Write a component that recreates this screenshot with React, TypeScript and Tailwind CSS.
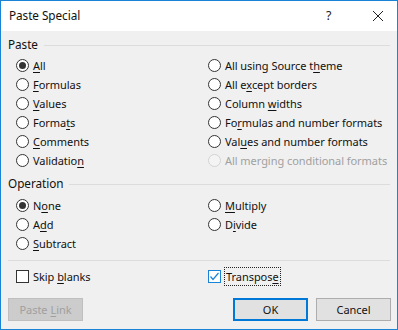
import React from 'react';

type Opt = { pre: string; key: string; post: string; checked?: boolean; disabled?: boolean };

const Label: React.FC<{ o: Opt }> = ({ o }) => (
  <span className="whitespace-nowrap">
    {o.pre}
    <span className="underline underline-offset-2">{o.key}</span>
    {o.post}
  </span>
);

const Radio: React.FC<{ o: Opt }> = ({ o }) => (
  <div className={`flex items-center h-[19px] gap-[4px] ${o.disabled ? 'text-[#a0a0a0]' : 'text-[#111]'}`}>
    <span
      className={`w-[13px] h-[13px] rounded-full border flex items-center justify-center shrink-0 ${
        o.disabled ? 'border-[#d4d4d4] bg-[#f4f4f4]' : 'border-[#333] bg-white'
      }`}
    >
      {o.checked && <span className="w-[7px] h-[7px] rounded-full bg-[#333]" />}
    </span>
    <Label o={o} />
  </div>
);

const Group: React.FC<{ title?: string }> = ({ title }) => (
  <div className="flex items-center h-4 gap-[6px] pr-[7px]">
    {title && <span className="text-[#111] text-[11.75px]">{title}</span>}
    <div className="flex-1 h-px bg-[#dcdcdc]" />
  </div>
);

const pasteLeft: Opt[] = [
  { pre: '', key: 'A', post: 'll', checked: true },
  { pre: '', key: 'F', post: 'ormulas' },
  { pre: '', key: 'V', post: 'alues' },
  { pre: 'Forma', key: 't', post: 's' },
  { pre: '', key: 'C', post: 'omments' },
  { pre: 'Validatio', key: 'n', post: '' },
];

const pasteRight: Opt[] = [
  { pre: 'All using Source t', key: 'h', post: 'eme' },
  { pre: 'All e', key: 'x', post: 'cept borders' },
  { pre: 'Column ', key: 'w', post: 'idths' },
  { pre: 'Fo', key: 'r', post: 'mulas and number formats' },
  { pre: 'Val', key: 'u', post: 'es and number formats' },
  { pre: 'All merging conditional formats', key: '', post: '', disabled: true },
];

const opLeft: Opt[] = [
  { pre: 'N', key: 'o', post: 'ne', checked: true },
  { pre: 'A', key: 'd', post: 'd' },
  { pre: '', key: 'S', post: 'ubtract' },
];

const opRight: Opt[] = [
  { pre: '', key: 'M', post: 'ultiply' },
  { pre: 'D', key: 'i', post: 'vide' },
];

export default function App() {
  return (
    <div
      className="w-[398px] h-[330px] border border-[#1883d7] bg-[#f0f0f0] flex flex-col text-[11px] tracking-[-0.05px] leading-none"
      style={{ fontFamily: '"Noto Sans", "Open Sans", sans-serif' }}
    >
      <div className="h-[30px] bg-white flex items-center pl-2 shrink-0">
        <span className="flex-1 text-[#111] text-[11.75px]">Paste Special</span>
        <span className="text-[#222] text-[12.5px] w-[14px] mr-[32px]">?</span>
        <svg width="12" height="12" viewBox="0 0 12 12" className="mr-[13px]">
          <path d="M1 1 L11 11 M11 1 L1 11" stroke="#222" strokeWidth="1" />
        </svg>
      </div>

      <div className="flex flex-col pl-[7px] pt-[6px]">
        <Group title="Paste" />
        <div className="grid grid-cols-[192px_1fr] pl-2 mt-[3px]">
          <div className="flex flex-col">
            {pasteLeft.map((o, i) => (
              <Radio key={i} o={o} />
            ))}
          </div>
          <div className="flex flex-col">
            {pasteRight.map((o, i) => (
              <Radio key={i} o={o} />
            ))}
          </div>
        </div>

        <div className="mt-[6px]">
          <Group title="Operation" />
        </div>
        <div className="grid grid-cols-[192px_1fr] pl-2 mt-[4px]">
          <div className="flex flex-col">
            {opLeft.map((o, i) => (
              <Radio key={i} o={o} />
            ))}
          </div>
          <div className="flex flex-col">
            {opRight.map((o, i) => (
              <Radio key={i} o={o} />
            ))}
          </div>
        </div>

        <div className="h-px bg-[#dcdcdc] mt-[7px] mr-[7px]" />

        <div className="grid grid-cols-[192px_1fr] pl-2 mt-[6px]">
          <div className="flex items-center h-[19px] gap-[4px] text-[#111]">
            <span className="w-[13px] h-[13px] border border-[#333] bg-white shrink-0" />
            <span className="whitespace-nowrap">
              Skip <span className="underline underline-offset-2">b</span>lanks
            </span>
          </div>
          <div className="flex items-center h-[19px] gap-[3px] text-[#111]">
            <span className="w-[13px] h-[13px] border border-[#1883d7] bg-white shrink-0 flex items-center justify-center">
              <svg width="11" height="11" viewBox="0 0 11 11">
                <path d="M1.5 5.5 L4 8.5 L9.5 2" stroke="#1883d7" strokeWidth="1.2" fill="none" />
              </svg>
            </span>
            <span className="border border-dotted border-[#222] px-px py-[3px] whitespace-nowrap">
              Transpos<span className="underline underline-offset-2">e</span>
            </span>
          </div>
        </div>

        <div className="flex items-center mt-[12px] pr-[6px]">
          <div className="w-[75px] h-[23px] border border-[#bfbfbf] bg-[#cccccc] text-[#a0a0a0] flex items-center justify-center">
            Paste <span className="underline underline-offset-2 ml-[3px]">L</span>ink
          </div>
          <div className="flex-1" />
          <div className="w-[75px] h-[23px] border-2 border-[#0078d7] bg-[#e1e1e1] text-[#111] flex items-center justify-center">
            OK
          </div>
          <div className="w-[75px] h-[23px] border border-[#adadad] bg-[#e1e1e1] text-[#111] flex items-center justify-center ml-[8px]">
            Cancel
          </div>
        </div>
      </div>
    </div>
  );
}
